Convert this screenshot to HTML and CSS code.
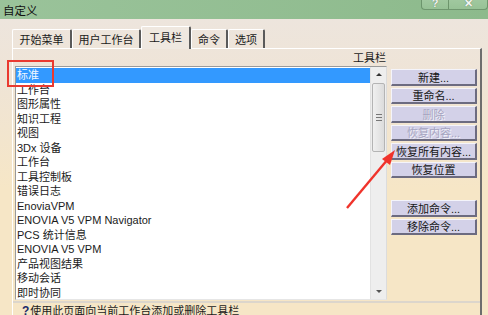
FILE: index.html
```html
<!DOCTYPE html>
<html lang="zh-CN">
<head>
    <meta charset="UTF-8">
    <title>自定义</title>
    <link rel="stylesheet" href="styles.css">
</head>
<body>

<div class="window">
    <div class="titlebar">
        <span class="title">自定义</span>
        <div class="caption-btns">
            <div class="cap help">?</div>
            <div class="cap close">✕</div>
        </div>
    </div>

    <div class="dialog">
        <div class="tabs">
            <div class="tab t1">开始菜单</div>
            <div class="tab t2">用户工作台</div>
            <div class="tab t3 active">工具栏</div>
            <div class="tab t4">命令</div>
            <div class="tab t5">选项</div>
        </div>

        <div class="panel">
            <div class="main">
                <div class="list-col">
                    <div class="list-head">工具栏</div>
                    <div class="listbox">
                        <div class="rows">
                            <div class="row selected">标准</div>
                            <div class="row">工作台</div>
                            <div class="row">图形属性</div>
                            <div class="row">知识工程</div>
                            <div class="row">视图</div>
                            <div class="row">3Dx 设备</div>
                            <div class="row">工作台</div>
                            <div class="row">工具控制板</div>
                            <div class="row">错误日志</div>
                            <div class="row">EnoviaVPM</div>
                            <div class="row">ENOVIA V5 VPM Navigator</div>
                            <div class="row">PCS 统计信息</div>
                            <div class="row">ENOVIA V5 VPM</div>
                            <div class="row">产品视图结果</div>
                            <div class="row">移动会话</div>
                            <div class="row">即时协同</div>
                        </div>
                        <div class="scrollbar">
                            <div class="arrow up"></div>
                            <div class="thumb">
                                <span></span><span></span><span></span>
                            </div>
                            <div class="track"></div>
                            <div class="arrow down"></div>
                        </div>
                    </div>
                </div>

                <div class="btn-col">
                    <div class="btn-group">
                        <div class="btn">新建...</div>
                        <div class="btn">重命名...</div>
                        <div class="btn disabled">删除</div>
                        <div class="btn disabled">恢复内容...</div>
                        <div class="btn">恢复所有内容...</div>
                        <div class="btn">恢复位置</div>
                    </div>
                    <div class="btn-group second">
                        <div class="btn">添加命令...</div>
                        <div class="btn">移除命令...</div>
                    </div>
                </div>
            </div>

            <div class="hint">
                <span class="q">?</span>使用此页面向当前工作台添加或删除工具栏
            </div>
        </div>
    </div>

    <!-- annotations drawn over the screenshot -->
    <div class="mark-box"></div>
    <svg class="mark-arrow" width="488" height="315" viewBox="0 0 488 315">
        <line x1="347" y1="208" x2="388" y2="159" stroke="#f0332b" stroke-width="2.4"/>
        <polygon points="395,150 382,159 390,165" fill="#f0332b"/>
    </svg>
</div>

</body>
</html>
```

FILE: styles.css
```css
body {
    margin: 0;
    width: 488px;
    height: 315px;
    overflow: hidden;
    font-family: "Liberation Sans", "Noto Sans CJK SC", sans-serif;
    font-size: 11px;
    color: #1a1a1a;
    background: #f6e6c6;
}
.window {
    position: relative;
    width: 488px;
    height: 315px;
    overflow: hidden;
}
.titlebar {
    height: 19px;
    display: flex;
    justify-content: space-between;
    align-items: flex-start;
    background: linear-gradient(90deg, #9ac39a, #8dba8c);
}
.title {
    padding: 2px 0 0 3px;
    font-size: 11.5px;
    color: #111;
}
.caption-btns {
    display: flex;
    margin-top: -4px;
}
.cap {
    height: 13px;
    display: flex;
    align-items: flex-end;
    justify-content: center;
    border: 1px solid rgba(70, 110, 70, 0.55);
    border-top: none;
    background: linear-gradient(#a4cba3, #97c296);
    color: #f4f4f4;
    font-weight: bold;
    font-size: 11px;
    line-height: 12px;
    text-shadow: 0 0 1px #4a6a4a;
}
.help {
    width: 26px;
    border-radius: 0 0 0 4px;
}
.close {
    width: 38px;
    border-left: none;
    border-radius: 0 0 4px 0;
}

.dialog {
    height: 296px;
    padding: 8px 0 0 12px;
    border-left: 2px solid #a9c3a4;
    margin-left: -2px;
    background: linear-gradient(#ede5dd 0px, #efe4d6 60px, #f6e6c6 170px);
}
.tabs {
    display: flex;
    align-items: flex-end;
    height: 21px;
    position: relative;
    z-index: 2;
}
.tab {
    height: 19px;
    display: flex;
    align-items: center;
    justify-content: center;
    box-sizing: border-box;
    border-top: 1px solid #ffffff;
    border-left: 1px solid #ffffff;
    border-right: 2px solid #5a5a5a;
    border-radius: 2px 2px 0 0;
    font-size: 11px;
}
.t1 { width: 60px; }
.t2 { width: 69px; }
.t3 { width: 50px; }
.t4 { width: 37px; }
.t5 { width: 37px; }
.tab.active {
    height: 23px;
    margin-bottom: -1px;
    background: #efe8e0;
    padding-bottom: 2px;
}

.panel {
    width: 470px;
    height: 275px;
    box-sizing: border-box;
    border-top: 1px solid #ffffff;
    border-left: 1px solid #ffffff;
    border-right: 2px solid #6d6d6d;
    display: flex;
    flex-direction: column;
}
.main {
    display: flex;
    padding-left: 2px;
}
.list-col {
    width: 372px;
}
.list-head {
    height: 17px;
    text-align: right;
    line-height: 18px;
    padding-right: 1px;
    font-size: 11px;
}
.listbox {
    height: 234px;
    box-sizing: border-box;
    border: 1px solid #9a9a9a;
    border-right-color: #dcdcdc;
    border-bottom-color: #e6e6e6;
    background: #ffffff;
    display: flex;
    overflow: hidden;
}
.rows {
    flex: 1;
    padding-top: 1px;
}
.row {
    height: 14.5px;
    line-height: 14.5px;
    padding-left: 1px;
    white-space: nowrap;
}
.row.selected {
    background: #3399ff;
    color: #f2f8ff;
}
.scrollbar {
    width: 15px;
    display: flex;
    flex-direction: column;
    background: #eeeeee;
    border-left: 1px solid #e2e2e2;
}
.arrow {
    height: 15px;
    display: flex;
    align-items: center;
    justify-content: center;
}
.arrow::after {
    content: "";
    border-left: 3px solid transparent;
    border-right: 3px solid transparent;
}
.arrow.up::after {
    border-bottom: 3px solid #333;
}
.arrow.down::after {
    border-top: 3px solid #555;
}
.thumb {
    height: 69px;
    margin: 1px 1px 0 1px;
    box-sizing: border-box;
    border: 1px solid #b4b4b4;
    border-radius: 2px;
    background: linear-gradient(90deg, #f0f0f0, #dcdcdc);
    display: flex;
    flex-direction: column;
    justify-content: center;
    align-items: center;
    gap: 2px;
}
.thumb span {
    width: 6px;
    height: 1px;
    background: #777;
}
.track {
    flex: 1;
}

.btn-col {
    width: 86px;
    margin-left: 4px;
    padding-top: 20px;
}
.btn-group {
    display: flex;
    flex-direction: column;
    gap: 2px;
}
.btn-group.second {
    margin-top: 22px;
}
.btn {
    height: 16.5px;
    box-sizing: border-box;
    display: flex;
    align-items: center;
    justify-content: center;
    background: #d3d1e8;
    border-top: 1px solid #f4f4fb;
    border-left: 1px solid #f4f4fb;
    border-right: 2px solid #6c6b80;
    border-bottom: 2px solid #6c6b80;
    font-size: 11px;
    color: #151515;
}
.btn.disabled {
    color: #a6a4c0;
    text-shadow: 1px 1px 0 #f3f3fa;
}

.hint {
    margin-top: 1px;
    border-top: 2px solid #dcd6cc;
    padding: 2px 0 0 9px;
    font-size: 11px;
    line-height: 13px;
    white-space: nowrap;
}
.q {
    font-weight: bold;
    color: #1a2a6a;
    font-size: 12px;
    margin-right: 1px;
}

.mark-box {
    position: absolute;
    left: 7px;
    top: 60px;
    width: 43px;
    height: 23px;
    border: 2px solid #ea3a30;
}
.mark-arrow {
    position: absolute;
    left: 0;
    top: 0;
    pointer-events: none;
}
```
